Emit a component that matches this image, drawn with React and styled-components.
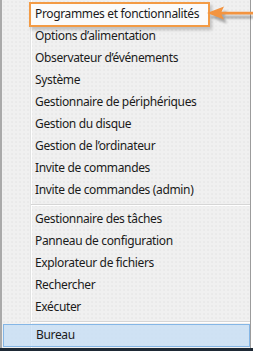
import React from 'react';
import styled, { createGlobalStyle } from 'styled-components';

const GlobalStyle = createGlobalStyle`
  html, body {
    margin: 0;
    padding: 0;
    background: #ffffff;
  }
`;

const Screen = styled.div`
  width: 253px;
  height: 351px;
  display: flex;
  flex-direction: column;
  background: #ffffff;
  position: relative;
  overflow: hidden;
`;

const Menu = styled.div`
  position: relative;
  width: 251px;
  height: 348px;
  box-sizing: border-box;
  padding-top: 3px;
  border-left: 2px solid #a9a9a9;
  border-right: 1px solid #9c9c9c;
  background-color: #f0f0f0;
  background-image:
    linear-gradient(to right, transparent 28px, #e2e3e3 28px, #e2e3e3 29px, #ffffff 29px, #ffffff 30px, transparent 30px),
    radial-gradient(circle, #e6e6e6 0.6px, transparent 0.9px);
  background-size: 100% 100%, 4px 4px;
  font-family: 'Segoe UI', 'Noto Sans', 'Open Sans', sans-serif;
  font-size: 12px;
  letter-spacing: -0.35px;
  color: #1b1b1b;
`;

const Taskbar = styled.div`
  height: 3px;
  background: #1e2935;
`;

const Item = styled.div`
  position: relative;
  z-index: 1;
  height: ${(p) => (p.$tall ? 23 : 22)}px;
  line-height: ${(p) => (p.$tall ? 23 : 22)}px;
  padding-left: 33px;
  box-sizing: border-box;
  white-space: nowrap;
  ${(p) =>
    p.$active &&
    `
    margin-left: 1px;
    padding-left: 32px;
    background: rgba(196, 222, 246, 0.75);
    border: 1px solid #84b6e6;
    line-height: 20px;
  `}
`;

const Separator = styled.div`
  height: ${(p) => p.$h}px;
  display: flex;
  align-items: center;
  padding-left: 29px;
  &::before {
    content: '';
    flex: 1;
    height: 1px;
    background: #d6d6d6;
    box-shadow: 0 1px 0 #ffffff;
  }
`;

const Callout = styled.div`
  position: absolute;
  z-index: 0;
  left: 27px;
  top: 2px;
  width: 177px;
  height: 21px;
  border: 2px solid #f39b45;
  background: #fbfbfb;
  box-shadow: 2px 3px 3px rgba(0, 0, 0, 0.2);
  pointer-events: none;
`;

const Arrow = styled.svg`
  position: absolute;
  z-index: 2;
  left: 203px;
  top: 2px;
  overflow: visible;
`;

const groups = [
  [
    'Programmes et fonctionnalités',
    'Options d’alimentation',
    'Observateur d’événements',
    'Système',
    'Gestionnaire de périphériques',
    'Gestion du disque',
    'Gestion de l’ordinateur',
    'Invite de commandes',
    'Invite de commandes (admin)',
  ],
  [
    'Gestionnaire des tâches',
    'Panneau de configuration',
    'Explorateur de fichiers',
    'Rechercher',
    'Exécuter',
  ],
];

const arrowPath = 'M2 11 L19 4.5 L16.5 9.8 L50 9.8 L50 12.6 L16.5 12.6 L19 17.5 Z';

export default function App() {
  return (
    <>
      <GlobalStyle />
      <Screen>
        <Menu>
          <Callout />
          {groups[0].map((t) => (
            <Item key={t}>{t}</Item>
          ))}
          <Separator $h={7} />
          {groups[1].map((t) => (
            <Item key={t}>{t}</Item>
          ))}
          <Separator $h={6} />
          <Item $active $tall>Bureau</Item>
          <Arrow width="50" height="22" viewBox="0 0 50 22">
            <defs>
              <filter id="sh" x="-20%" y="-50%" width="140%" height="200%">
                <feGaussianBlur stdDeviation="1.3" />
              </filter>
            </defs>
            <path d={arrowPath} transform="translate(3 4)" fill="#000" opacity="0.3" filter="url(#sh)" />
            <path d={arrowPath} fill="#f39440" />
          </Arrow>
        </Menu>
        <Taskbar />
      </Screen>
    </>
  );
}
